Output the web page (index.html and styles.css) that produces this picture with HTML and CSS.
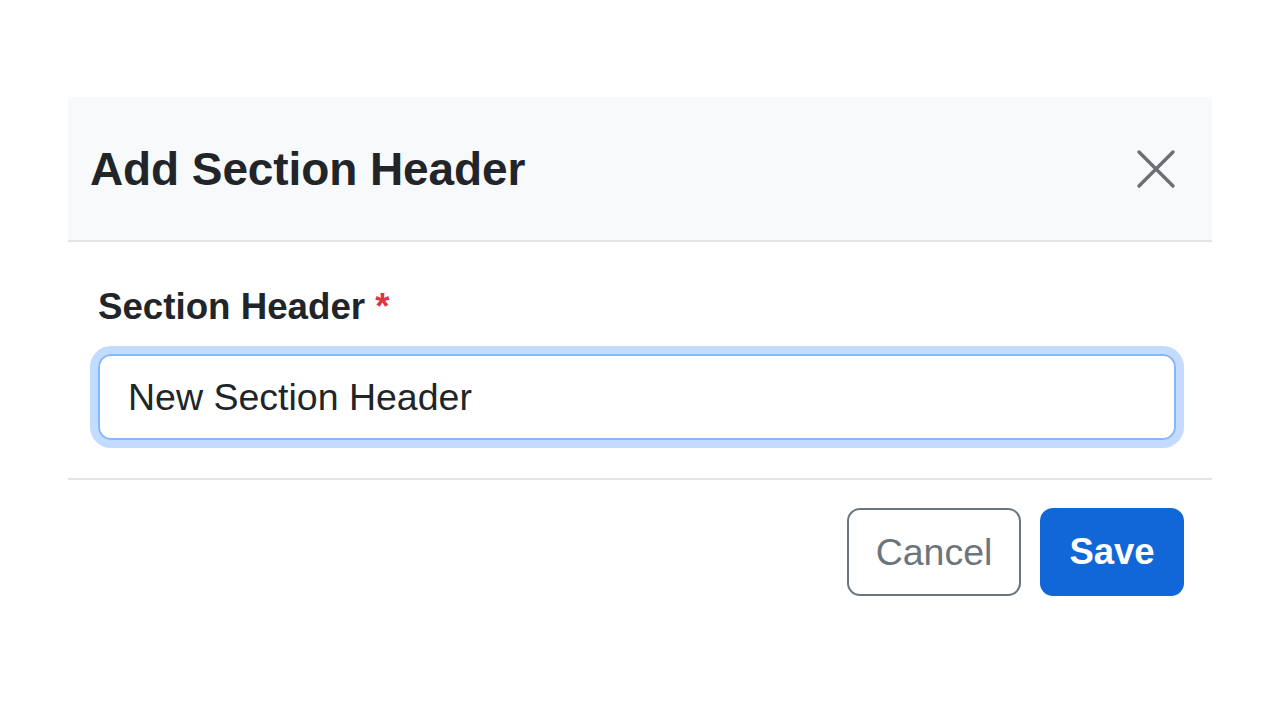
FILE: index.html
```html
<!DOCTYPE html>
<html lang="en">
<head>
<meta charset="utf-8">
<title>Add Section Header</title>
<link rel="stylesheet" href="styles.css">
</head>
<body>
<div class="page">
  <div class="modal">
    <div class="modal-header">
      <h2 class="modal-title">Add Section Header</h2>
      <button class="close" aria-label="Close">
        <svg viewBox="0 0 40 40" width="40" height="40"><path d="M3 3 L37 37 M37 3 L3 37" stroke="#6b6e72" stroke-width="3.4" stroke-linecap="round" fill="none"/></svg>
      </button>
    </div>
    <div class="modal-body">
      <label class="form-label">Section Header <span class="req">*</span></label>
      <div class="input">New Section Header</div>
    </div>
    <div class="modal-footer">
      <button class="btn btn-outline">Cancel</button>
      <button class="btn btn-primary">Save</button>
    </div>
  </div>
</div>
</body>
</html>
```
FILE: styles.css
```css
html, body {
  margin: 0;
  padding: 0;
  background: #ffffff;
  font-family: "Liberation Sans", Arial, sans-serif;
  color: #212529;
}
.page {
  padding: 97px 68px 0 68px;
}
.modal {
  background: #ffffff;
}
.modal-header {
  background: #f8f9fa;
  height: 143px;
  border-bottom: 2px solid #e3e5e8;
  display: flex;
  align-items: center;
  justify-content: space-between;
  padding: 0 36px 0 22px;
}
.modal-title {
  margin: 0;
  font-size: 46px;
  font-weight: 700;
  color: #212529;
  letter-spacing: -0.1px;
}
.close {
  border: 0;
  background: transparent;
  padding: 0;
  width: 40px;
  height: 40px;
  display: flex;
}
.modal-body {
  padding: 44px 36px 38px 30px;
  border-bottom: 2px solid #e3e5e8;
}
.form-label {
  display: block;
  font-size: 36.7px;
  font-weight: 700;
  color: #212529;
  margin-bottom: 26px;
}
.req {
  color: #dc3545;
}
.input {
  height: 82px;
  border: 2px solid #86b7fe;
  border-radius: 13px;
  box-shadow: 0 0 0 8px rgba(13, 110, 253, 0.25);
  font-size: 37.5px;
  color: #212529;
  display: flex;
  align-items: center;
  padding: 0 28px;
}
.modal-footer {
  display: flex;
  justify-content: flex-end;
  gap: 19px;
  padding: 28px 28px;
}
.btn {
  height: 88px;
  font-family: "Liberation Sans", Arial, sans-serif;
  font-size: 37.5px;
  border-radius: 13px;
  padding: 0;
}
.btn-outline {
  width: 174px;
  background: #fff;
  border: 2px solid #6c757d;
  color: #6c757d;
}
.btn-primary {
  width: 144px;
  background: #1166d8;
  border: 2px solid #1166d8;
  color: #fff;
  font-size: 36.5px;
  font-weight: 700;
}
```
